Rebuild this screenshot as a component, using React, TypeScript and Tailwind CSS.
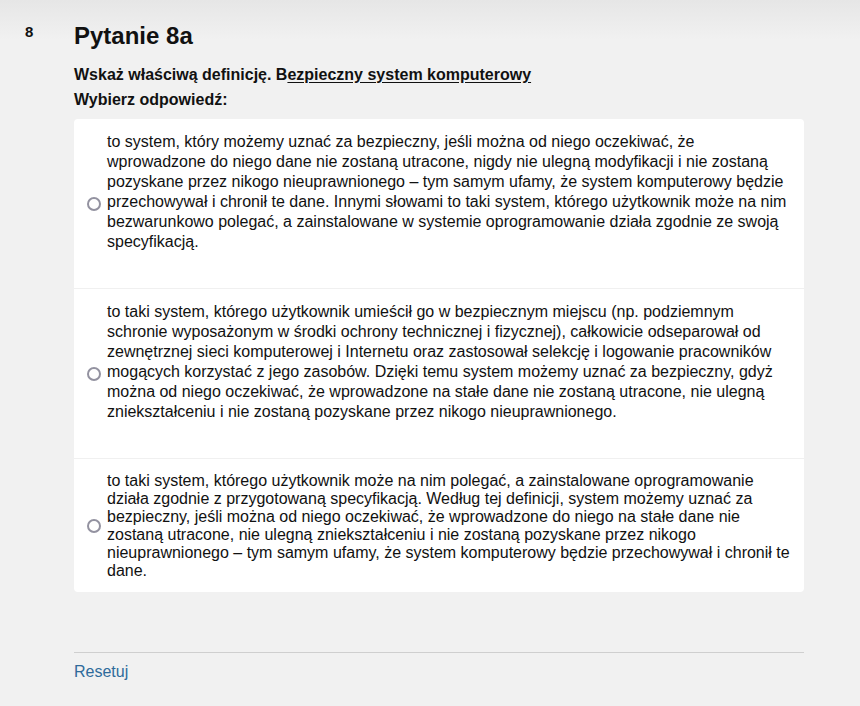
import React from 'react';

const options = [
  'to system, który możemy uznać za bezpieczny, jeśli można od niego oczekiwać, że wprowadzone do niego dane nie zostaną utracone, nigdy nie ulegną modyfikacji i nie zostaną pozyskane przez nikogo nieuprawnionego – tym samym ufamy, że system komputerowy będzie przechowywał i chronił te dane. Innymi słowami to taki system, którego użytkownik może na nim bezwarunkowo polegać, a zainstalowane w systemie oprogramowanie działa zgodnie ze swoją specyfikacją.',
  'to taki system, którego użytkownik umieścił go w bezpiecznym miejscu (np. podziemnym schronie wyposażonym w środki ochrony technicznej i fizycznej), całkowicie odseparował od zewnętrznej sieci komputerowej i Internetu oraz zastosował selekcję i logowanie pracowników mogących korzystać z jego zasobów. Dzięki temu system możemy uznać za bezpieczny, gdyż można od niego oczekiwać, że wprowadzone na stałe dane nie zostaną utracone, nie ulegną zniekształceniu i nie zostaną pozyskane przez nikogo nieuprawnionego.',
];

const last =
  'to taki system, którego użytkownik może na nim polegać, a zainstalowane oprogramowanie działa zgodnie z przygotowaną specyfikacją. Według tej definicji, system możemy uznać za bezpieczny, jeśli można od niego oczekiwać, że wprowadzone do niego na stałe dane nie zostaną utracone, nie ulegną zniekształceniu i nie zostaną pozyskane przez nikogo nieuprawnionego – tym samym ufamy, że system komputerowy będzie przechowywał i chronił te dane.';

function Radio() {
  return <span className="shrink-0 w-[14px] h-[14px] rounded-full border-2 border-[#9392a0] bg-white" />;
}

export default function App() {
  return (
    <div className="min-h-[706px] bg-[linear-gradient(to_bottom,#e6e6e6,#f1f1f1_40px)] font-['Liberation_Sans',Arial,sans-serif] text-[#111]">
      <div className="flex pt-[22px]">
        <div className="w-[74px] pl-[25px] pt-[1px] text-[15px] leading-[17px] font-bold">8</div>
        <div className="w-[730px]">
          <h1 className="text-[24px] font-bold leading-[28px]">Pytanie 8a</h1>
          <p className="mt-[16px] text-[16px] leading-[18px] font-bold">
            Wskaż właściwą definicję. B<span className="underline underline-offset-2">ezpieczny system komputerowy </span>
          </p>
          <p className="mt-[7px] text-[16px] leading-[18px] font-bold">Wybierz odpowiedź:</p>
          <div className="mt-[10px] rounded bg-white text-[16px]">
            {options.map((t, i) => (
              <label key={i} className="flex items-center gap-[6px] border-b border-[#f0f0f0] pl-[13px] pr-2 pt-[13px] pb-3">
                <Radio />
                <p className="mb-6 leading-5">{t}</p>
              </label>
            ))}
            <label className="flex items-center gap-[6px] pl-[13px] pr-2 pt-[13px] pb-3">
              <Radio />
              <span className="leading-[18px]">{last}</span>
            </label>
          </div>
          <div className="mt-[60px] border-t border-[#cfcfcf] pt-[7px]">
            <a href="#" className="text-[16px] leading-[18px] text-[#2f6b9b]">Resetuj</a>
          </div>
        </div>
      </div>
    </div>
  );
}
